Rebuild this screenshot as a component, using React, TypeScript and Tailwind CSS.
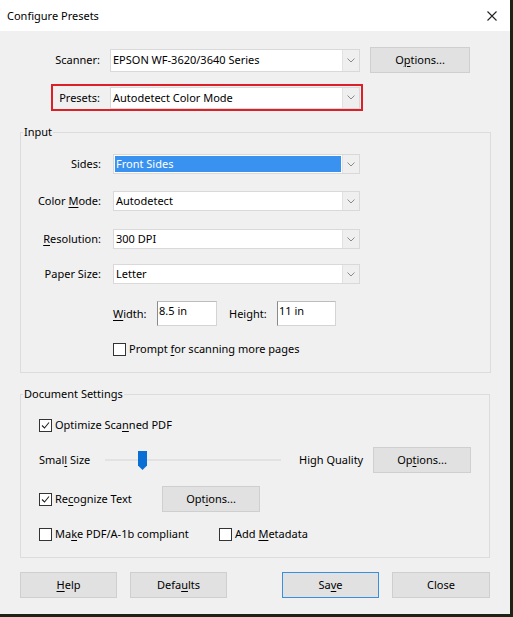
import type { ReactNode } from 'react'

const font = { fontFamily: "'Noto Sans', 'Open Sans', sans-serif" }

function U({ children }: { children: ReactNode }) {
  return <span className="underline underline-offset-2 decoration-1">{children}</span>
}

function Chevron() {
  return (
    <svg className="w-[8px] h-[5px]" viewBox="0 0 8 5" fill="none" stroke="#8a8a8a" strokeWidth={1}>
      <path d="M0.5 0.5L4 4L7.5 0.5" />
    </svg>
  )
}

function Select({ value, width, height = 'h-[23px]', selected = false }: { value: string; width: string; height?: string; selected?: boolean }) {
  return (
    <div className={`flex ${width} ${height} border border-[#d9d9d9] bg-white`}>
      <div className="flex-1 flex items-center p-[1px]">
        <span className={`h-full flex items-center pl-[1px] w-full ${selected ? 'bg-[#3a92f0] text-white' : 'text-black'}`}>{value}</span>
      </div>
      <div className="w-[17px] flex items-center justify-center bg-[#efefef] border-l border-[#e2e2e2]">
        <Chevron />
      </div>
    </div>
  )
}

function Button({ children, width = 'w-[98px]', primary = false }: { children: ReactNode; width?: string; primary?: boolean }) {
  return (
    <button
      className={`${width} h-[26px] flex items-center justify-center bg-[#e1e1e1] border text-black ${primary ? 'border-[#3b8ede]' : 'border-[#cfcfcf]'}`}
    >
      {children}
    </button>
  )
}

function Check({ checked = false, children }: { checked?: boolean; children: ReactNode }) {
  return (
    <label className="flex items-center gap-[3px]">
      <span className="w-[13px] h-[13px] border border-[#333] bg-white flex items-center justify-center">
        {checked && (
          <svg className="w-[9px] h-[9px]" viewBox="0 0 9 9" fill="none" stroke="#222" strokeWidth={1.1}>
            <path d="M1 4.5L3.5 7L8 1.5" />
          </svg>
        )}
      </span>
      <span>{children}</span>
    </label>
  )
}

function Row({ label, children, className = '' }: { label: ReactNode; children: ReactNode; className?: string }) {
  return (
    <div className={`flex items-center ${className}`}>
      <span className="w-[92px] text-right pr-[12px]">{label}</span>
      {children}
    </div>
  )
}

export default function App() {
  return (
    <div className="w-[513px] h-[617px] bg-[#f0f0f0] text-[11px] leading-[16px] text-black flex flex-col border-r-[3px] border-b-[3px] border-[#1d2416]" style={font}>
      {/* Title bar */}
      <div className="h-[31px] bg-white flex items-center justify-between pl-[7px] pr-[13px] shrink-0">
        <span className="text-[11px]">Configure Presets</span>
        <svg className="w-[10px] h-[10px]" viewBox="0 0 10 10" stroke="#222" strokeWidth={1.1}>
          <path d="M0.5 0.5L9.5 9.5M9.5 0.5L0.5 9.5" />
        </svg>
      </div>

      {/* Scanner */}
      <div className="flex items-center mt-[16px] h-[26px]">
        <span className="w-[100px] text-right">Scanner:</span>
        <div className="ml-[10px]">
          <Select value="EPSON WF-3620/3640 Series" width="w-[250px]" />
        </div>
        <div className="ml-[10px]">
          <Button width="w-[100px]">
            O<U>p</U>tions...
          </Button>
        </div>
      </div>

      {/* Presets (highlighted) */}
      <div className="ml-[51px] mt-[11px] w-[312px] h-[27px] border-2 border-[#dc2028] flex items-center">
        <span className="w-[47px] text-right">Presets:</span>
        <div className="ml-[10px]">
          <Select value="Autodetect Color Mode" width="w-[250px]" height="h-[22px]" />
        </div>
      </div>

      {/* Input group */}
      <fieldset className="ml-[20px] mr-[19px] mt-[13px] h-[249px] border border-[#dcdcdc] pt-[14px]">
        <legend className="ml-[2px] px-[1px]">Input</legend>
        <Row label="Sides:">
          <Select value="Front Sides" width="w-[247px]" height="h-[20px]" selected />
        </Row>
        <Row label={<>Color <U>M</U>ode:</>} className="mt-[17px]">
          <Select value="Autodetect" width="w-[247px]" height="h-[20px]" />
        </Row>
        <Row label={<><U>R</U>esolution:</>} className="mt-[18px]">
          <Select value="300 DPI" width="w-[247px]" height="h-[20px]" />
        </Row>
        <Row label="Paper Size:" className="mt-[15px]">
          <Select value="Letter" width="w-[247px]" height="h-[20px]" />
        </Row>
        <div className="flex items-center ml-[92px] mt-[17px]">
          <span className="w-[44px]"><U>W</U>idth:</span>
          <div className="w-[60px] h-[25px] bg-white border border-[#d4d4d4] border-l-[#8a8a8a] border-t-[#bdbdbd] pl-[1px] pt-[1px]">8.5 in</div>
          <span className="ml-[12px] w-[48px]">Height:</span>
          <div className="w-[59px] h-[25px] bg-white border border-[#d4d4d4] border-l-[#8a8a8a] border-t-[#bdbdbd] pl-[1px] pt-[1px]">11 in</div>
        </div>
        <div className="ml-[92px] mt-[15px]">
          <Check>
            Prompt <U>f</U>or scanning more pages
          </Check>
        </div>
      </fieldset>

      {/* Document Settings group */}
      <fieldset className="ml-[20px] mr-[20px] mt-[13px] h-[172px] border border-[#dcdcdc]">
        <legend className="ml-[2px] px-[1px]">Document Settings</legend>
        <div className="pl-[18px] pt-[15px]">
          <Check checked>
            Optimize Sca<U>n</U>ned PDF
          </Check>
          <div className="flex items-center mt-[14px] h-[26px]">
            <span className="w-[66px]">Smal<U>l</U> Size</span>
            <div className="w-[176px] h-[2px] bg-[#e2e2e2] flex items-center">
              <svg className="ml-[33px] w-[9px] h-[19px]" viewBox="0 0 9 19">
                <path d="M0 0H9V14.5L4.5 19L0 14.5Z" fill="#0a6fd4" />
              </svg>
            </div>
            <span className="ml-[18px] w-[74px]">High Quality</span>
            <Button width="w-[98px]">
              Op<U>t</U>ions...
            </Button>
          </div>
          <div className="flex items-center mt-[13px] h-[26px]">
            <div className="w-[123px]">
              <Check checked>
                Re<U>c</U>ognize Text
              </Check>
            </div>
            <Button width="w-[98px]">
              Opt<U>i</U>ons...
            </Button>
          </div>
          <div className="flex items-center mt-[14px]">
            <div className="w-[180px]">
              <Check>
                Ma<U>k</U>e PDF/A-1b compliant
              </Check>
            </div>
            <Check>
              Add <U>M</U>etadata
            </Check>
          </div>
        </div>
      </fieldset>

      {/* Footer buttons */}
      <div className="flex items-center ml-[20px] mt-[14px]">
        <Button width="w-[97px]"><U>H</U>elp</Button>
        <div className="ml-[13px]">
          <Button width="w-[97px]">Defa<U>u</U>lts</Button>
        </div>
        <div className="ml-[55px]">
          <Button width="w-[97px]" primary>Sa<U>v</U>e</Button>
        </div>
        <div className="ml-[13px]">
          <Button width="w-[98px]">Close</Button>
        </div>
      </div>
    </div>
  )
}
